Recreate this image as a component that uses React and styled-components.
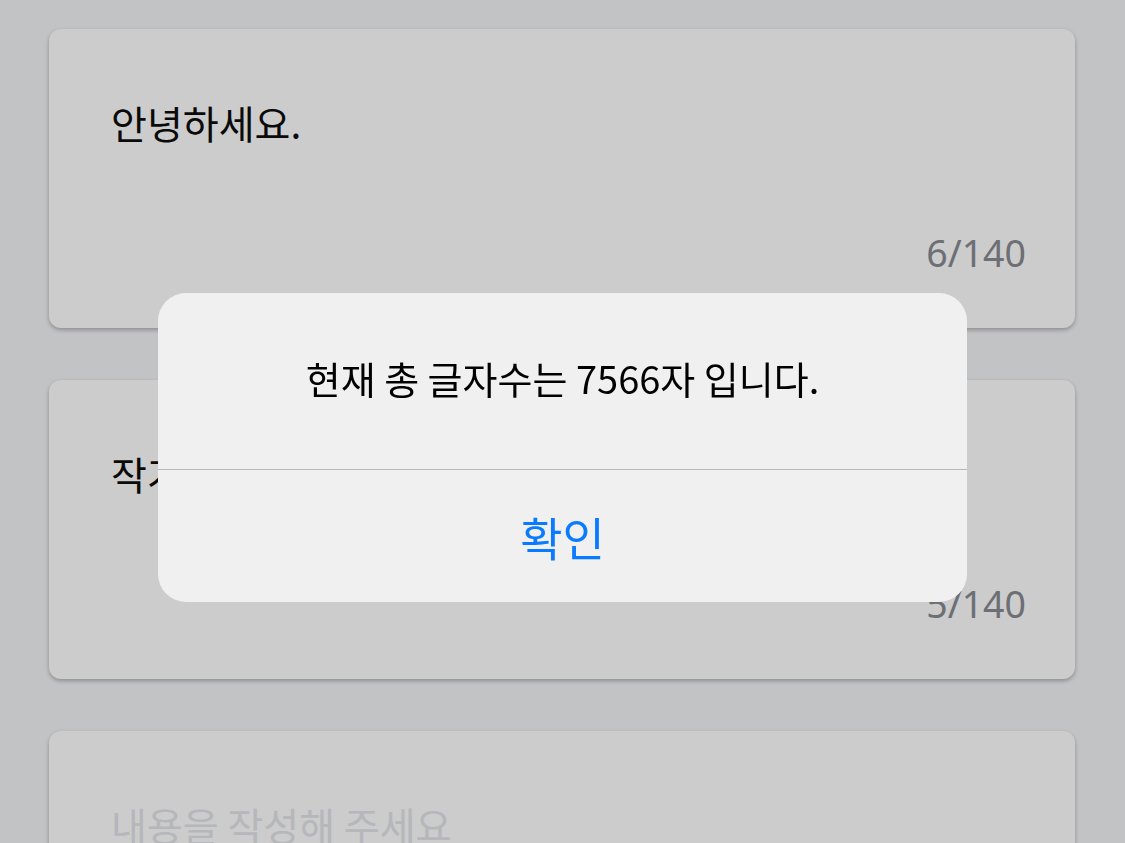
import * as React from 'react';
import styled, { createGlobalStyle } from 'styled-components';

const GlobalStyle = createGlobalStyle`
  html, body {
    margin: 0;
    padding: 0;
    background: #f3f4f6;
    font-family: 'Noto Sans CJK KR', 'Noto Sans', sans-serif;
    overflow: hidden;
  }
`;

const Page = styled.div`
  display: flex;
  flex-direction: column;
  gap: 52px;
  padding: 29px 50px 0 49px;
  height: 843px;
  box-sizing: border-box;
`;

const Card = styled.div`
  flex: 0 0 299px;
  display: flex;
  flex-direction: column;
  justify-content: space-between;
  padding: 66px 49px 53px 62px;
  box-sizing: border-box;
  background: #ffffff;
  border-radius: 12px;
  box-shadow: 0 2px 4px rgba(0, 0, 0, 0.28);
`;

const Content = styled.div`
  font-size: 39px;
  line-height: 54px;
  color: ${(p) => (p.$empty ? '#e3e5ea' : '#0d0d0d')};
  white-space: nowrap;
`;

const Counter = styled.div`
  align-self: flex-end;
  font-family: 'Noto Sans', sans-serif;
  font-size: 37.5px;
  line-height: 44px;
  color: #878b92;
`;

const Overlay = styled.div`
  position: fixed;
  inset: 0;
  background: rgba(0, 0, 0, 0.2);
  display: flex;
  justify-content: center;
  align-items: flex-start;
  padding-top: 293px;
  box-sizing: border-box;
`;

const Dialog = styled.div`
  width: 809px;
  height: 309px;
  display: flex;
  flex-direction: column;
  background: #f0f0f0;
  border-radius: 28px;
  overflow: hidden;
`;

const Message = styled.div`
  flex: 0 0 177px;
  display: flex;
  align-items: center;
  justify-content: center;
  padding-bottom: 8px;
  box-sizing: border-box;
  font-size: 38px;
  color: #000;
  border-bottom: 1px solid #b9b9b9;
`;

const Confirm = styled.button`
  flex: 1;
  border: 0;
  background: transparent;
  font-family: inherit;
  font-size: 46px;
  color: #0a7aff;
  padding: 0;
  cursor: pointer;
`;

const notes = [
  { text: '안녕하세요.', count: 6 },
  { text: '작가입니다', count: 5 },
  { text: '', count: 0 },
];

export default function App() {
  return (
    <>
      <GlobalStyle />
      <Page>
        {notes.map((n, i) => (
          <Card key={i}>
            <Content $empty={!n.text}>{n.text || '내용을 작성해 주세요'}</Content>
            {n.text && <Counter>{n.count}/140</Counter>}
          </Card>
        ))}
      </Page>
      <Overlay>
        <Dialog>
          <Message>현재 총 글자수는 7566자 입니다.</Message>
          <Confirm>확인</Confirm>
        </Dialog>
      </Overlay>
    </>
  );
}
